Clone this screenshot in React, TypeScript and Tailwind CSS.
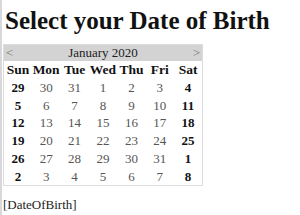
import React from 'react'

const weeks = [
  [29, 30, 31, 1, 2, 3, 4],
  [5, 6, 7, 8, 9, 10, 11],
  [12, 13, 14, 15, 16, 17, 18],
  [19, 20, 21, 22, 23, 24, 25],
  [26, 27, 28, 29, 30, 31, 1],
  [2, 3, 4, 5, 6, 7, 8],
]

const days = ['Sun', 'Mon', 'Tue', 'Wed', 'Thu', 'Fri', 'Sat']

export default function App() {
  return (
    <div className="w-[300px] h-[215px] bg-white border-l-2 border-[#d8d8dc] pl-[1px] overflow-hidden" style={{ fontFamily: '"Liberation Serif", "Times New Roman", serif' }}>
      <h1 className="text-[25px] font-bold leading-none pt-[8px] pl-[2px] text-[#111]">Select your Date of Birth</h1>

      {/* Calendar */}
      <table className="mt-[11px] w-[200px] table-fixed border border-[#dcdcdc] border-collapse text-[13px] leading-none">
        <tbody>
          <tr className="bg-[#d3d3d3] h-[16px]">
            <td colSpan={7} className="p-0">
              <div className="flex items-center justify-between px-[2px] text-[#777]">
                <span>&lt;</span>
                <span className="text-[#222]">January 2020</span>
                <span>&gt;</span>
              </div>
            </td>
          </tr>
          <tr className="h-[18px]">
            {days.map((d) => (
              <th key={d} className="font-bold text-center text-[#111] p-0 text-[13.5px]">{d}</th>
            ))}
          </tr>
          {weeks.map((w, i) => (
            <tr key={i} className="h-[17.8px]">
              {w.map((n, j) => (
                <td
                  key={j}
                  className={
                    j === 0 || j === 6
                      ? 'text-center font-bold text-[#111] p-0'
                      : 'text-center text-[#555] p-0'
                  }
                >
                  {n}
                </td>
              ))}
            </tr>
          ))}
        </tbody>
      </table>

      <div className="text-[13px] mt-[9px] text-[#222]">[DateOfBirth]</div>
    </div>
  )
}
